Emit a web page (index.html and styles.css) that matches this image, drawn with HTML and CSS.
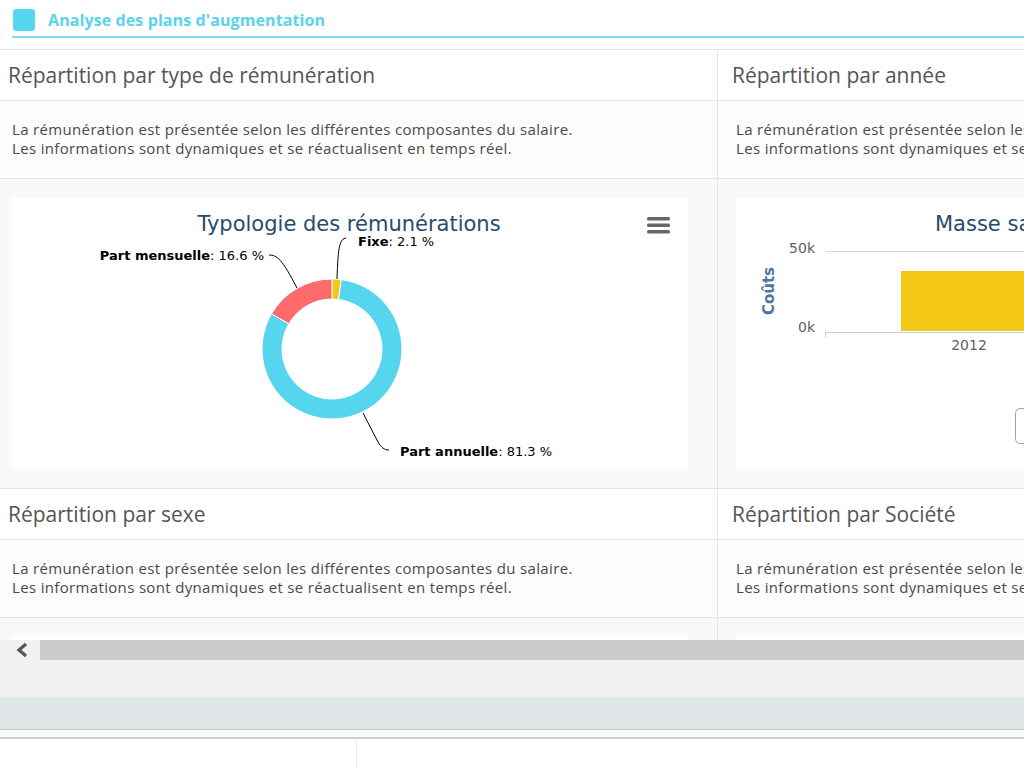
FILE: index.html
```html
<!DOCTYPE html>
<html lang="fr">

<head>
    <meta charset="UTF-8">
    <meta name="viewport" content="width=device-width, initial-scale=1.0">
    <title>Analyse des plans d'augmentation</title>
    <link rel="stylesheet" href="styles.css">
</head>

<body>
    <header class="page-head">
        <div class="head-inner">
            <span class="head-square"></span>
            <h1 class="head-title">Analyse des plans d'augmentation</h1>
        </div>
    </header>

    <section class="board">
        <div class="board-grid">
            <!-- carte 1 -->
            <div class="card">
                <div class="card-title">Répartition par type de rémunération</div>
                <div class="card-desc">La rémunération est présentée selon les différentes composantes du salaire.<br>Les informations sont dynamiques et se réactualisent en temps réel.</div>
                <div class="card-chart">
                    <div class="chart-box">
                        <svg class="chart-svg" width="676" height="271" viewBox="0 0 676 271">
                            <text class="chart-title" x="337" y="34" text-anchor="middle">Typologie des rémunérations</text>
                            <g class="menu-icon">
                                <rect x="635" y="20" width="23" height="3.5" rx="1.5"></rect>
                                <rect x="635" y="26.5" width="23" height="3.5" rx="1.5"></rect>
                                <rect x="635" y="33" width="23" height="3.5" rx="1.5"></rect>
                            </g>
                            <path class="slice slice-fixe" d="M320,82 A70,70 0 0 1 329.21,82.61 L326.58,102.43 A50,50 0 0 0 320,102 Z"></path>
                            <path class="slice slice-annuelle" d="M329.21,82.61 A70,70 0 1 1 259.52,116.75 L276.8,126.82 A50,50 0 1 0 326.58,102.43 Z"></path>
                            <path class="slice slice-mensuelle" d="M259.52,116.75 A70,70 0 0 1 320,82 L320,102 A50,50 0 0 0 276.8,126.82 Z"></path>
                            <path class="connector" d="M257,58 C265,58 270,62 285,91"></path>
                            <path class="connector" d="M334,41 C328,42 326,48 325,82"></path>
                            <path class="connector" d="M351,216 L366,245 C369,250 372,253 377,253"></path>
                            <text class="data-label" x="252" y="63" text-anchor="end"><tspan class="bold">Part mensuelle</tspan>: 16.6 %</text>
                            <text class="data-label" x="346" y="49"><tspan class="bold">Fixe</tspan>: 2.1 %</text>
                            <text class="data-label" x="388" y="259"><tspan class="bold">Part annuelle</tspan>: 81.3 %</text>
                        </svg>
                    </div>
                </div>
            </div>
            <!-- carte 2 -->
            <div class="card">
                <div class="card-title">Répartition par année</div>
                <div class="card-desc">La rémunération est présentée selon les différentes composantes du salaire.<br>Les informations sont dynamiques et se réactualisent en temps réel.</div>
                <div class="card-chart">
                    <div class="chart-box">
                        <svg class="chart-svg" width="676" height="271" viewBox="0 0 676 271">
                            <text class="chart-title" x="199" y="34">Masse salariale par année</text>
                            <path class="grid-line" d="M90,54.5 H676"></path>
                            <rect class="bar" x="164.5" y="73.5" width="135" height="61"></rect>
                            <path class="axis-line" d="M90,135.5 H676 M89.5,135 V140"></path>
                            <text class="axis-label" x="79" y="56" text-anchor="end">50k</text>
                            <text class="axis-label" x="79" y="135" text-anchor="end">0k</text>
                            <text class="axis-label" x="233" y="153" text-anchor="middle">2012</text>
                            <text class="axis-title" transform="translate(38 94) rotate(-90)" text-anchor="middle">Coûts</text>
                            <rect class="chart-button" x="279.5" y="211.5" width="120" height="35" rx="5"></rect>
                        </svg>
                    </div>
                </div>
            </div>
            <!-- carte 3 -->
            <div class="card">
                <div class="card-title">Répartition par sexe</div>
                <div class="card-desc">La rémunération est présentée selon les différentes composantes du salaire.<br>Les informations sont dynamiques et se réactualisent en temps réel.</div>
                <div class="card-chart">
                    <div class="chart-box"></div>
                </div>
            </div>
            <!-- carte 4 -->
            <div class="card">
                <div class="card-title">Répartition par Société</div>
                <div class="card-desc">La rémunération est présentée selon les différentes composantes du salaire.<br>Les informations sont dynamiques et se réactualisent en temps réel.</div>
                <div class="card-chart">
                    <div class="chart-box"></div>
                </div>
            </div>
        </div>
    </section>

    <div class="scroll-bar">
        <div class="scroll-arrow">
            <svg width="14" height="16" viewBox="0 0 14 16">
                <path d="M11,2 L4,8 L11,14" fill="none" stroke="#555" stroke-width="3.2"></path>
            </svg>
        </div>
        <div class="scroll-track"></div>
    </div>
    <div class="scroll-pad"></div>
    <div class="band"></div>
    <div class="foot-strip"></div>
    <div class="foot-row">
        <div class="foot-cell"></div>
        <div class="foot-rest"></div>
    </div>
</body>

</html>
```

FILE: styles.css
```css
html,
body {
    margin: 0;
    padding: 0;
    box-sizing: border-box;
}

body {
    width: 1024px;
    height: 768px;
    overflow: hidden;
    background: #fff;
    font-family: "Open Sans", sans-serif;
}

/* entête */
.page-head {
    margin: 0 0 11px 12px;
    padding-top: 9px;
}

.head-inner {
    display: flex;
    align-items: flex-start;
    padding-bottom: 5px;
    border-bottom: 2px solid #7fdeee;
}

.head-square {
    width: 22px;
    height: 22px;
    margin-left: 1px;
    border-radius: 3px;
    background: #55d5ee;
}

.head-title {
    margin: 0 0 0 13px;
    font-size: 16px;
    line-height: 22px;
    letter-spacing: 0.1px;
    font-weight: bold;
    color: #5bd3ea;
}

/* tableau de bord */
.board {
    height: 590px;
    border-top: 1px solid #e4e4e4;
    overflow: hidden;
}

.board-grid {
    display: grid;
    grid-template-columns: repeat(2, 724px);
    margin-left: -6px;
    width: max-content;
}

.card {
    border-right: 1px solid #e4e4e4;
}

.card-title {
    height: 50px;
    line-height: 50px;
    padding-left: 14px;
    font-size: 21px;
    color: #555;
    border-bottom: 1px solid #e4e4e4;
    white-space: nowrap;
}

.card-desc {
    padding: 19px 18px 20px;
    font-size: 15px;
    line-height: 19px;
    letter-spacing: 0.34px;
    color: #4a4a4a;
    background: #fcfcfc;
    border-bottom: 1px solid #e4e4e4;
    white-space: nowrap;
}

.card-chart {
    padding: 18px 29px 20px 18px;
    background: #f9f9f9;
    border-bottom: 1px solid #e4e4e4;
}

.chart-box {
    height: 271px;
    background: #fff;
}

.chart-svg {
    display: block;
    font-family: "DejaVu Sans", sans-serif;
}

.chart-title {
    font-size: 21px;
    fill: #274b6d;
}

.menu-icon rect {
    fill: #666;
}

.slice {
    stroke: #fff;
    stroke-width: 1;
}

.slice-fixe {
    fill: #f4c717;
}

.slice-annuelle {
    fill: #55d5ee;
}

.slice-mensuelle {
    fill: #ff6a6a;
}

.connector {
    fill: none;
    stroke: #000;
    stroke-width: 1;
}

.data-label {
    font-size: 13px;
    fill: #000;
}

.data-label .bold {
    font-weight: bold;
}

.grid-line {
    stroke: #d8d8d8;
    stroke-width: 1;
}

.axis-line {
    stroke: #c0d0e0;
    stroke-width: 1;
    fill: none;
}

.bar {
    fill: #f4c717;
    stroke: #fff;
    stroke-width: 1;
}

.axis-label {
    font-size: 14px;
    fill: #606060;
}

.axis-title {
    font-size: 15px;
    font-weight: bold;
    fill: #4d759e;
}

.chart-button {
    fill: #fff;
    stroke: #a0a0a0;
    stroke-width: 1;
}

/* barre de défilement */
.scroll-bar {
    display: flex;
    height: 20px;
    background: #f0f0f0;
}

.scroll-arrow {
    width: 40px;
    display: flex;
    align-items: center;
    padding-left: 15px;
    box-sizing: border-box;
}

.scroll-arrow svg {
    display: block;
}

.scroll-track {
    flex: 1;
    background: #cccccc;
}

.scroll-pad {
    height: 37px;
    background: #f0f0f0;
}

.band {
    height: 32px;
    background: #e1e6e9;
}

.foot-strip {
    height: 7px;
    background: #fafafa;
    border-top: 1px solid #c9c9c9;
    border-bottom: 2px solid #cfcfcf;
}

.foot-row {
    display: flex;
    height: 40px;
}

.foot-cell {
    width: 356px;
    border-right: 1px solid #ececec;
}

.foot-rest {
    flex: 1;
}
```
